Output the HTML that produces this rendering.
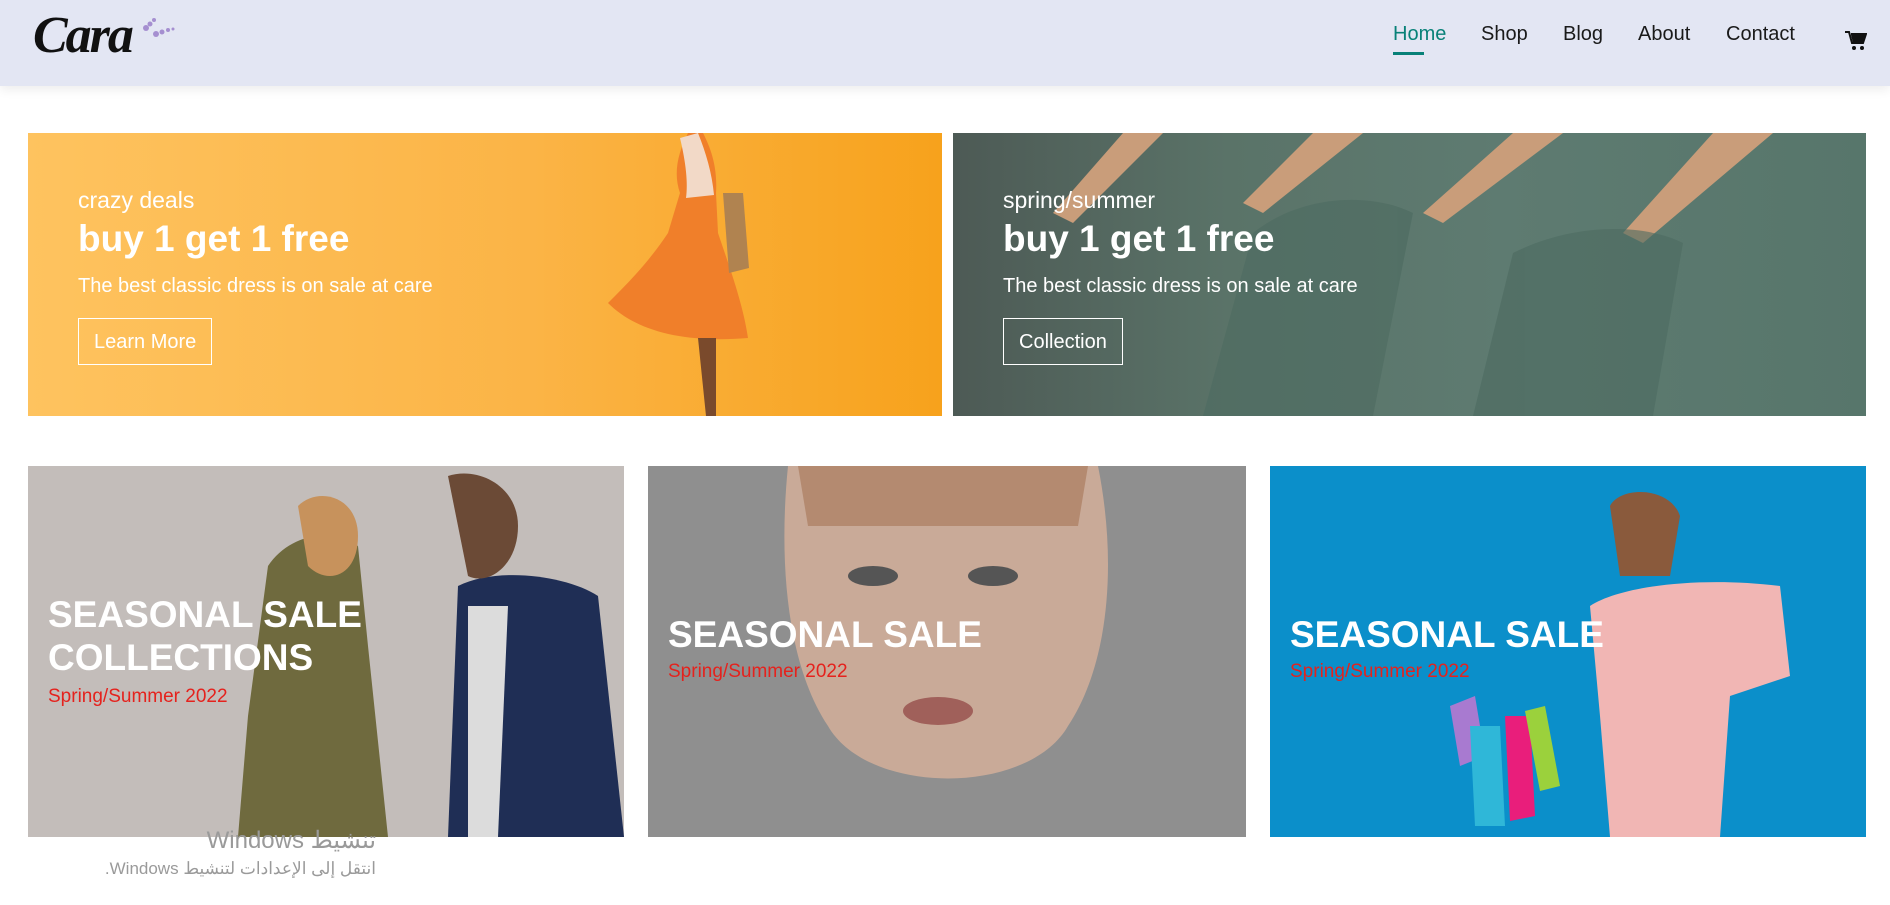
<!DOCTYPE html>
<html><head><meta charset="utf-8"><style>
*{margin:0;padding:0;box-sizing:border-box}
body{width:1890px;height:905px;overflow:hidden;background:#fff;font-family:"Liberation Sans",Arial,sans-serif;position:relative}
#hdr{position:absolute;left:0;top:0;width:1890px;height:86px;background:#e3e6f3;box-shadow:0 4px 10px rgba(0,0,0,.07)}
.logo{position:absolute;left:33px;top:6px;font-family:"Liberation Serif",serif;font-style:italic;font-weight:bold;font-size:52px;color:#111;letter-spacing:-2px}
.nav{position:absolute;top:23px;font-size:20px;color:#1a1a1a}
.nav.act{color:#088178}
.uline{position:absolute;left:1393px;top:52px;width:31px;height:3px;background:#088178}
.box{position:absolute;overflow:hidden;color:#fff}
.b1{left:28px;top:133px;width:914px;height:283px;background:linear-gradient(90deg,#fec35f 0%,#fbb446 55%,#f7a21c 100%)}
.b2{left:953px;top:133px;width:913px;height:283px;background:linear-gradient(90deg,#4d5a55 0%,#5a7368 30%,#5e7b71 60%,#57766b 100%)}
.sm{position:absolute;left:50px;top:54px;font-size:23px}
.big{position:absolute;left:50px;top:85px;font-size:37px;font-weight:bold}
.p{position:absolute;left:50px;top:142px;font-size:20px}
.btn{position:absolute;left:50px;top:185px;height:47px;border:1px solid #fff;font-size:20px;padding:12px 15px 0}
.c{top:466px;height:371px}
.c1{left:28px;width:596px;background:#c3bdba}
.c2{left:648px;width:598px;background:#8f8f8f}
.c3{left:1270px;width:596px;background:#0b8fca}
.t{position:absolute;left:20px;font-size:37px;font-weight:bold;line-height:43px}
.s{position:absolute;left:20px;font-size:19px;color:#e5221d}
.w{position:absolute;right:1514px;color:#9a9a9a;font-family:"Liberation Sans","Noto Sans CJK SC",sans-serif;white-space:nowrap}
</style></head><body>
<div id="hdr">
<div class="logo">Cara</div>
<svg style="position:absolute;left:128px;top:12px" width="50" height="30"><g fill="#a58fd0"><circle cx="18" cy="16" r="3"/><circle cx="22" cy="12" r="2.5"/><circle cx="26" cy="8" r="2"/><circle cx="28" cy="22" r="3"/><circle cx="34" cy="20" r="2.5"/><circle cx="40" cy="18" r="2"/><circle cx="45" cy="17" r="1.5"/></g></svg>
<div class="nav act" style="left:1393px">Home</div>
<div class="uline"></div>
<div class="nav" style="left:1481px">Shop</div>
<div class="nav" style="left:1563px">Blog</div>
<div class="nav" style="left:1638px">About</div>
<div class="nav" style="left:1726px">Contact</div>
<svg style="position:absolute;left:1845px;top:30px" width="22" height="22" viewBox="0 0 22 22"><path d="M0 2h4l3 11h11l3-9H6" fill="none" stroke="#111" stroke-width="2"/><path d="M6 5h15l-3 8H8z" fill="#111"/><circle cx="9" cy="18" r="2" fill="#111"/><circle cx="17" cy="18" r="2" fill="#111"/></svg>
</div>

<div class="box b1">
<svg style="position:absolute;left:540px;top:0" width="240" height="283"><path d="M120 0 C110 20 105 40 112 60 L100 100 C80 130 60 150 40 170 C70 200 120 210 180 205 C175 170 160 130 150 100 L148 60 C150 30 140 10 135 0Z" fill="#f07f2a"/><path d="M112 5 C118 30 120 50 118 65 L146 62 C144 40 138 20 130 0Z" fill="#f2d9c7"/><path d="M155 60 l20 0 l6 75 l-20 5z" fill="#b08350"/><path d="M130 205 l8 78 l10 0 l0 -78z" fill="#7a4a2c"/></svg>
<div class="sm">crazy deals</div>
<div class="big">buy 1 get 1 free</div>
<div class="p">The best classic dress is on sale at care</div>
<div class="btn">Learn More</div>
</div>

<div class="box b2">
<svg style="position:absolute;left:0;top:0" width="913" height="283"><g fill="#c99d7a"><path d="M170 0 l40 0 l-90 90 l-20 -10z"/><path d="M360 0 l50 0 l-100 80 l-20 -10z"/><path d="M560 0 l50 0 l-120 90 l-20 -10z"/><path d="M760 0 l60 0 l-130 110 l-20 -10z"/></g><g fill="#4c6a60" opacity=".6"><path d="M300 100 C350 60 420 60 460 80 L420 283 L250 283z"/><path d="M560 120 C620 90 690 90 730 110 L700 283 L520 283z"/></g></svg>
<div class="sm">spring/summer</div>
<div class="big">buy 1 get 1 free</div>
<div class="p">The best classic dress is on sale at care</div>
<div class="btn">Collection</div>
</div>

<div class="box c c1">
<svg style="position:absolute;left:0;top:0" width="596" height="371"><path d="M240 100 C260 70 300 60 330 80 L340 180 L360 371 L210 371 L220 250z" fill="#6f6a3e"/><path d="M270 40 C290 20 330 30 330 70 C330 110 300 120 280 100z" fill="#c7925c"/><path d="M430 120 C470 100 540 110 570 130 L596 371 L420 371z" fill="#1f2e55"/><path d="M440 140 L480 140 L470 371 L440 371z" fill="#dcdcdc"/><path d="M420 10 C450 0 490 20 490 60 C490 100 460 120 440 110z" fill="#6b4a36"/></svg>
<div class="t" style="top:127px">SEASONAL SALE<br>COLLECTIONS</div>
<div class="s" style="top:220px">Spring/Summer 2022</div>
</div>

<div class="box c c2">
<svg style="position:absolute;left:0;top:0" width="598" height="371"><path d="M140 0 L450 0 C470 100 460 200 420 260 C380 330 220 330 180 260 C140 200 130 100 140 0z" fill="#c9aa98"/><path d="M150 0 L440 0 L430 60 L160 60z" fill="#b48a70"/><ellipse cx="225" cy="110" rx="25" ry="10" fill="#555"/><ellipse cx="345" cy="110" rx="25" ry="10" fill="#555"/><ellipse cx="290" cy="245" rx="35" ry="14" fill="#a0605a"/></svg>
<div class="t" style="top:147px">SEASONAL SALE</div>
<div class="s" style="top:195px">Spring/Summer 2022</div>
</div>

<div class="box c c3">
<svg style="position:absolute;left:0;top:0" width="596" height="371"><path d="M340 40 C350 20 400 20 410 50 L400 110 L350 110z" fill="#8a5a3c"/><path d="M320 140 C350 120 430 110 510 120 L520 210 L460 230 L450 371 L340 371 L330 250z" fill="#f1b6b4"/><path d="M180 240 l25 -10 l10 60 l-25 10z" fill="#a87ad0"/><path d="M200 260 l30 0 l5 100 l-30 0z" fill="#2fb7d8"/><path d="M235 250 l25 0 l5 100 l-25 5z" fill="#e91e7b"/><path d="M255 245 l20 -5 l15 80 l-20 5z" fill="#9bd13c"/></svg>
<div class="t" style="top:147px">SEASONAL SALE</div>
<div class="s" style="top:195px">Spring/Summer 2022</div>
</div>

<div class="w" dir="rtl" style="top:826px;font-size:24px">تنشيط Windows</div>
<div class="w" dir="rtl" style="top:859px;font-size:17px">انتقل إلى الإعدادات لتنشيط Windows.</div>
</body></html>
